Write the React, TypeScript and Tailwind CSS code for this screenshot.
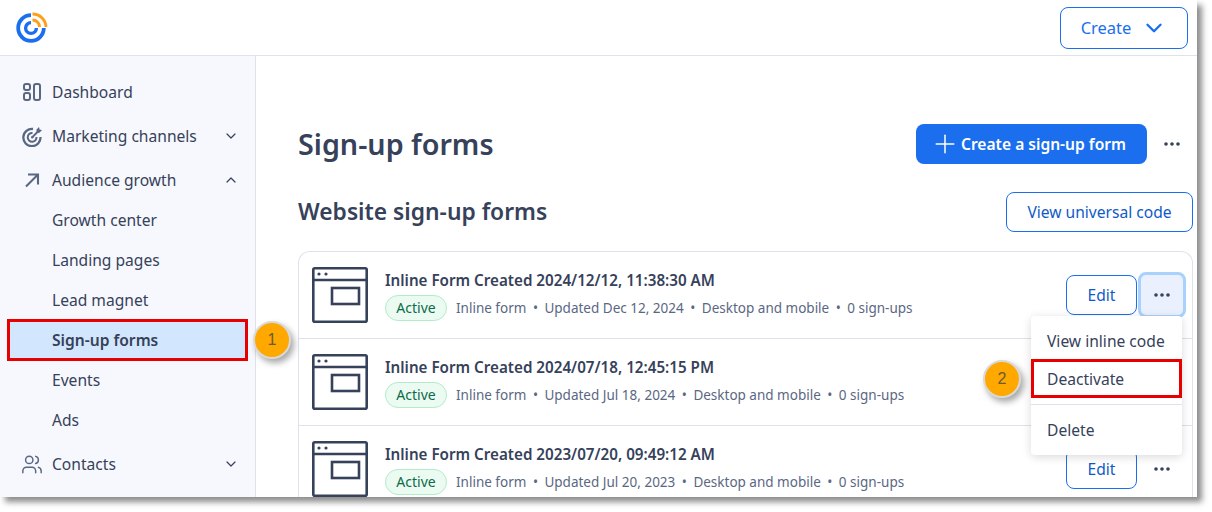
import type { ReactNode } from 'react';
import { ChevronDown, ChevronUp, Plus, Users } from 'lucide-react';

const rows = [
  { title: 'Inline Form Created 2024/12/12, 11:38:30 AM', updated: 'Dec 12, 2024' },
  { title: 'Inline Form Created 2024/07/18, 12:45:15 PM', updated: 'Jul 18, 2024' },
  { title: 'Inline Form Created 2023/07/20, 09:49:12 AM', updated: 'Jul 20, 2023' },
];

function Logo() {
  return (
    <svg width="34" height="34" viewBox="0 0 34 34" fill="none">
      <path d="M16 4.2A12.8 12.8 0 1 0 28.8 17" stroke="#1b6fee" strokeWidth="3.8" />
      <path d="M16 11.6A5.4 5.4 0 1 0 21.4 17" stroke="#1b6fee" strokeWidth="3.4" />
      <path d="M17.5 3A13.5 13.5 0 0 1 31 16" stroke="#ff9e1b" strokeWidth="3" />
      <path d="M17.5 9A7 7 0 0 1 24.5 16" stroke="#ff9e1b" strokeWidth="3" />
    </svg>
  );
}

function DashboardIcon() {
  return (
    <svg width="18" height="18" viewBox="0 0 18 18" fill="none" stroke="#5a6783" strokeWidth="2">
      <rect x="1" y="1" width="6" height="6" rx="2" />
      <rect x="1" y="10" width="6" height="7" rx="2" />
      <rect x="11" y="1" width="6" height="16" rx="2" />
    </svg>
  );
}

function TargetIcon() {
  return (
    <svg width="21" height="21" viewBox="0 0 21 21" fill="none" stroke="#5a6783" strokeWidth="2.3">
      <path d="M11 3a8.6 8.6 0 1 0 7.5 8" />
      <path d="M10.5 7a4.4 4.4 0 1 0 4 4" strokeWidth="2" />
      <circle cx="10.2" cy="11.3" r="1.2" fill="#5a6783" stroke="none" />
      <path d="M10.5 11l6-6" strokeWidth="1.8" />
      <path d="M14.5 6.8V3.5L17 1l.6 2.4L20 4l-2.5 2.8z" fill="#5a6783" stroke="none" />
    </svg>
  );
}

function GrowthIcon() {
  return (
    <svg width="16" height="16" viewBox="0 0 16 16" fill="none" stroke="#5a6783" strokeWidth="2.1">
      <path d="M2 14.5L14 2.5M4 2.5h10v10" />
    </svg>
  );
}

function FormIcon() {
  return (
    <svg width="56" height="56" viewBox="0 0 56 56" fill="none" stroke="#36415a" strokeWidth="2.6" className="shrink-0">
      <rect x="1.3" y="1.3" width="53.4" height="53.4" rx="1.5" />
      <path d="M1.3 13h53.4" />
      <rect x="20" y="21" width="27" height="16" />
      <circle cx="7" cy="7" r="1.6" fill="#36415a" stroke="none" />
      <circle cx="14" cy="7" r="1.6" fill="#36415a" stroke="none" />
    </svg>
  );
}

function Dots() {
  return (
    <svg width="16" height="4" viewBox="0 0 16 4" fill="#36415a">
      <circle cx="2" cy="2" r="1.8" />
      <circle cx="8" cy="2" r="1.8" />
      <circle cx="14" cy="2" r="1.8" />
    </svg>
  );
}

function Step({ n, className }: { n: number; className: string }) {
  return (
    <div className={`absolute flex h-[38px] w-[38px] items-center justify-center rounded-full border-2 border-[#d9d9d9] bg-[#ffa800] text-[16px] text-[#6b5a33] shadow-[3px_4px_6px_rgba(0,0,0,0.35)] [font-family:'Liberation_Sans',sans-serif] ${className}`}>
      {n}
    </div>
  );
}

function NavItem({ icon, label, chevron }: { icon: ReactNode; label: string; chevron?: 'up' | 'down' }) {
  return (
    <div className="relative flex h-[44px] items-center pl-[52px] pr-4 text-[#36415a]">
      <span className="absolute left-[21px] flex w-[22px] justify-center">{icon}</span>
      <span className="pt-[2px]">{label}</span>
      {chevron === 'down' && <ChevronDown size={16} strokeWidth={1.8} className="ml-auto text-[#36415a]" />}
      {chevron === 'up' && <ChevronUp size={16} strokeWidth={1.8} className="ml-auto text-[#36415a]" />}
    </div>
  );
}

function SubItem({ label, active }: { label: string; active?: boolean }) {
  return (
    <div className={`mx-[8px] flex h-[40px] items-center pl-[44px] pt-[2px] text-[#36415a] ${active ? 'bg-[#d2e7fd] font-semibold' : ''}`}>
      {label}
    </div>
  );
}

export default function App() {
  return (
    <div className="relative h-[512px] w-[1212px] overflow-hidden bg-white text-[15.6px] [font-family:'Noto_Sans',sans-serif]">
      <div className="relative flex h-[497px] w-[1197px] flex-col overflow-hidden bg-white shadow-[5px_5px_6px_rgba(0,0,0,0.45)]">
        <header className="flex h-[56px] shrink-0 items-center justify-between border-b border-[#dfe2ea] pl-[15px] pr-[9px]">
          <Logo />
          <button className="flex h-[42px] w-[128px] items-center justify-center gap-[10px] rounded-[8px] border border-[#1b6fee] pt-[2px] text-[16.5px] text-[#1b6fee]">
            Create
            <ChevronDown size={26} strokeWidth={2.2} className="-mt-[2px]" />
          </button>
        </header>

        <div className="flex min-h-0 flex-1">
          <aside className="w-[256px] shrink-0 border-r border-[#dfe2ea] bg-[#f7f8fd] pt-[14px]">
            <NavItem icon={<DashboardIcon />} label="Dashboard" />
            <NavItem icon={<TargetIcon />} label="Marketing channels" chevron="down" />
            <div className="-mb-[2px]">
              <NavItem icon={<GrowthIcon />} label="Audience growth" chevron="up" />
            </div>
            <SubItem label="Growth center" />
            <SubItem label="Landing pages" />
            <SubItem label="Lead magnet" />
            <SubItem label="Sign-up forms" active />
            <SubItem label="Events" />
            <SubItem label="Ads" />
            <div className="mt-[2px]">
              <NavItem icon={<Users size={27} strokeWidth={1.6} color="#5a6783" />} label="Contacts" chevron="down" />
            </div>
          </aside>

          <main className="min-w-0 flex-1 pl-[42px] pr-[4px] pt-[68px]">
            <div className="flex h-[40px] items-center justify-between pr-[13px]">
              <h1 className="text-[28.7px] font-semibold text-[#36415a]">Sign-up forms</h1>
              <div className="flex items-center gap-[17px]">
                <button className="flex h-[40px] w-[231px] items-center justify-center gap-[1px] rounded-[8px] bg-[#1b6fee] pt-[2px] font-semibold text-white">
                  <Plus size={30} strokeWidth={1.2} className="-my-[2px] -ml-[7px] -mt-[4px]" />
                  Create a sign-up form
                </button>
                <Dots />
              </div>
            </div>

            <div className="mt-[28px] flex h-[40px] items-center justify-between">
              <h2 className="pt-[1px] text-[22.8px] font-semibold text-[#36415a]">Website sign-up forms</h2>
              <button className="h-[40px] w-[187px] rounded-[8px] border border-[#1b6fee] pt-[2px] text-[#0f5ac8]">
                View universal code
              </button>
            </div>

            <div className="mt-[19px] rounded-t-[12px] border border-b-0 border-[#dfe2ea]">
              {rows.map((row, i) => (
                <div key={row.title} className={`flex items-center pl-[13px] pr-[6px] ${i > 0 ? 'h-[87px] border-t border-[#dfe2ea]' : 'h-[86px]'}`}>
                  <FormIcon />
                  <div className="ml-[17px] min-w-0">
                    <div className="text-[15.2px] font-semibold leading-[22px] text-[#36415a]">{row.title}</div>
                    <div className="mt-[4px] flex items-center text-[13.5px] text-[#5a6783]">
                      <span className="mr-[9px] flex h-[26px] w-[62px] items-center justify-center rounded-full border border-[#b3ecc9] bg-[#ebfbf1] pb-[1px] text-[14px] text-[#0b6b4a]">Active</span>
                      Inline form
                      <span className="mx-[6.5px]">•</span>
                      Updated {row.updated}
                      <span className="mx-[6.5px]">•</span>
                      Desktop and mobile
                      <span className="mx-[6.5px]">•</span>
                      0 sign-ups
                    </div>
                  </div>
                  {i !== 1 && (
                    <div className="ml-auto flex items-center gap-[1px]">
                      <button className="h-[40px] w-[71px] rounded-[8px] border border-[#1b6fee] pt-[2px] text-[#0f5ac8]">Edit</button>
                      <div className={`flex h-[46px] w-[48px] items-center justify-center rounded-[8px] ${i === 0 ? 'border-[3px] border-[#a8d2fb] bg-[#eaf0fd]' : ''}`}>
                        <Dots />
                      </div>
                    </div>
                  )}
                </div>
              ))}
            </div>
          </main>
        </div>

        <div className="absolute left-[7px] top-[319px] h-[42px] w-[241px] border-[3px] border-[#e60000]" />
        <Step n={1} className="left-[253px] top-[321px]" />
        <Step n={2} className="left-[983px] top-[360px]" />

        <div className="absolute left-[1031px] top-[316px] h-[139px] w-[151px] rounded-[4px] bg-white pt-[6px] text-[#36415a] shadow-[0_2px_10px_rgba(0,0,0,0.15)]">
          <div className="flex h-[37px] items-center pl-[16px] pt-[2px]">View inline code</div>
          <div className="flex h-[39px] items-center border-[3px] border-[#e60000] pl-[13px] pt-[2px]">Deactivate</div>
          <div className="mt-[6px] border-t border-[#dfe2ea]" />
          <div className="flex h-[50px] items-center pl-[16px] pt-[2px]">Delete</div>
        </div>
      </div>
    </div>
  );
}
